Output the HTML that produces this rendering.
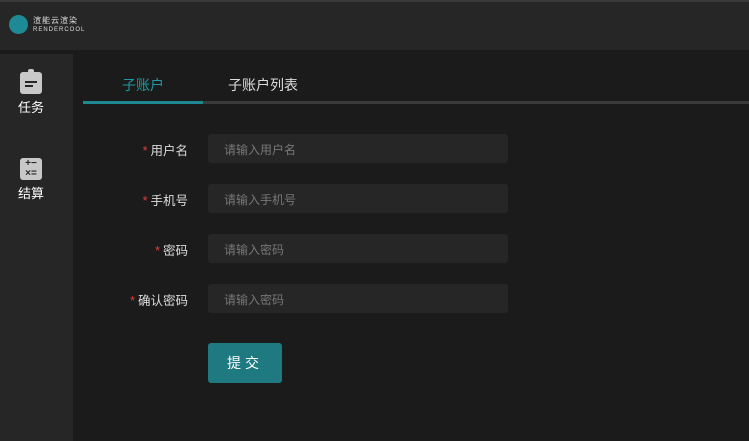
<!DOCTYPE html>
<html><head><meta charset="utf-8"><style>
*{margin:0;padding:0;box-sizing:border-box}
body{width:749px;height:441px;background:#1b1b1b;font-family:"Liberation Sans","Noto Sans CJK SC",sans-serif;position:relative;overflow:hidden;color:#ccc}
.top{position:absolute;left:0;top:0;width:749px;height:50px;background:#262626;border-top:2px solid #3a3a3a}
.logo{position:absolute;left:9px;top:13px;width:19px;height:19px;border-radius:50%;background:#1e8a95}
.lt{position:absolute;left:33px;top:15px;font-size:8px;color:#ddd;line-height:8px;letter-spacing:1px}
.side{position:absolute;left:0;top:54px;width:73px;height:387px;background:#262626}
.ni{position:absolute;left:0;width:62px;text-align:center;color:#fff;font-size:13px}
.ic{width:22px;height:22px;background:#c8c8c8;border-radius:3px;margin:0 auto 3px;position:relative}
.tab{position:absolute;top:75px;font-size:14px}
.line{position:absolute;top:101px;height:3px}
.lab{position:absolute;left:100px;width:88px;text-align:right;font-size:12.5px;color:#ddd}
.lab b{color:#e23c3c;font-weight:normal;margin-right:3px}
.inp{position:absolute;left:208px;width:300px;height:29px;background:#262626;border-radius:3px;font-size:12px;color:#777;padding:7px 0 0 16px}
.btn{position:absolute;left:208px;top:343px;width:74px;height:40px;background:#1e7a80;border-radius:3px;color:#fff;font-size:14px;text-align:center;line-height:40px;letter-spacing:4px}
</style></head><body>
<div class="top"><div class="logo"></div><div class="lt">渲能云渲染<br><span style="font-size:6px">RENDERCOOL</span></div></div>
<div class="side">
<div class="ni" style="top:18px"><div class="ic"><div style="position:absolute;left:8px;top:-3px;width:6px;height:5px;background:#c8c8c8;border-radius:2px 2px 0 0"></div><div style="position:absolute;left:5px;top:9px;width:12px;height:2px;background:#262626"></div><div style="position:absolute;left:5px;top:13px;width:8px;height:2px;background:#262626"></div></div>任务</div>
<div class="ni" style="top:104px"><div class="ic" style="font-size:10px;color:#262626;line-height:10px;font-weight:bold;padding-top:1px">+−<br>×=</div>结算</div>
</div>
<div class="tab" style="left:122px;color:#1e9aa0">子账户</div>
<div class="tab" style="left:228px;color:#ddd">子账户列表</div>
<div class="line" style="left:83px;width:120px;background:#1e8a8f"></div>
<div class="line" style="left:203px;width:546px;background:#3a3a3a"></div>
<div class="lab" style="top:140px"><b>*</b>用户名</div><div class="inp" style="top:134px">请输入用户名</div>
<div class="lab" style="top:190px"><b>*</b>手机号</div><div class="inp" style="top:184px">请输入手机号</div>
<div class="lab" style="top:240px"><b>*</b>密码</div><div class="inp" style="top:234px">请输入密码</div>
<div class="lab" style="top:290px"><b>*</b>确认密码</div><div class="inp" style="top:284px">请输入密码</div>
<div class="btn">提交</div>
</body></html>
